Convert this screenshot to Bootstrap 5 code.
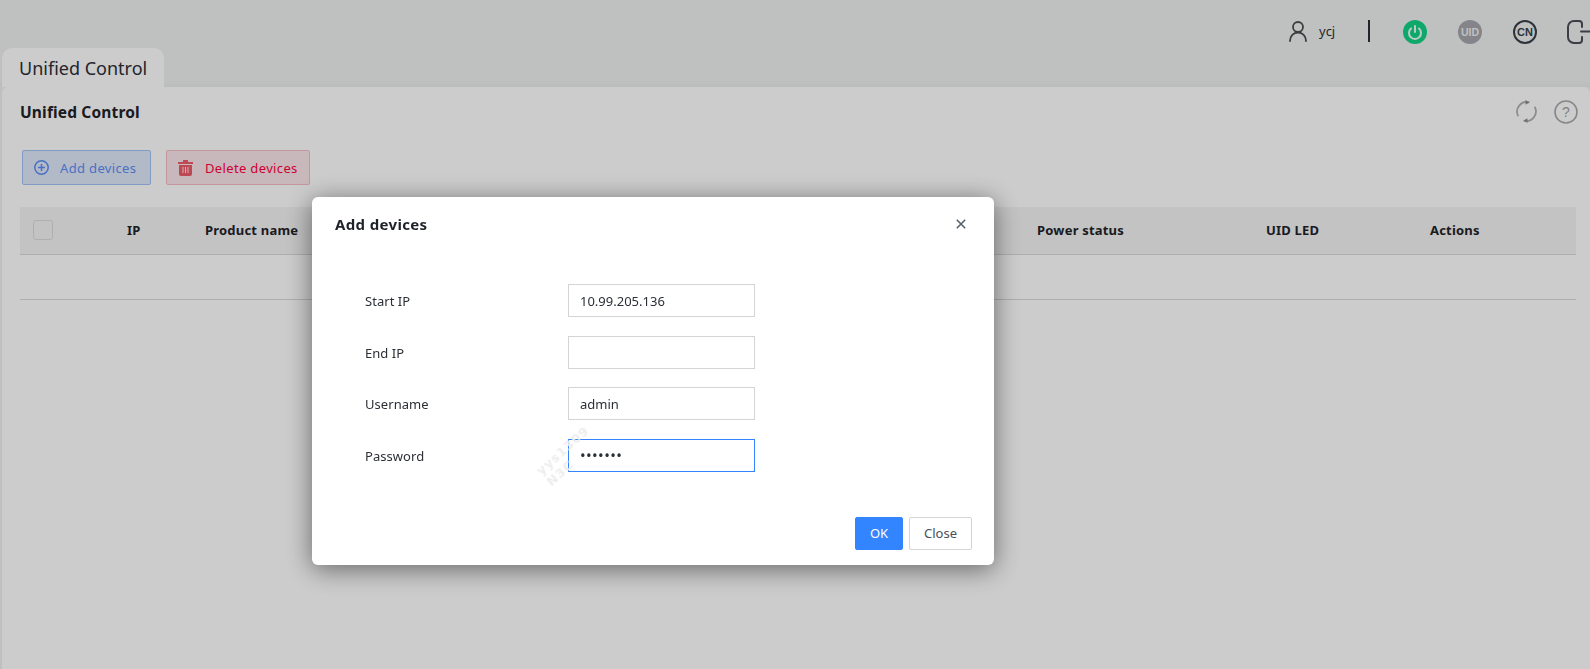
<!DOCTYPE html>
<html lang="en">
<head>
<meta charset="utf-8">
<title>Unified Control</title>
<link href="https://cdn.jsdelivr.net/npm/bootstrap@5.3.0/dist/css/bootstrap.min.css" rel="stylesheet">
<style>
html,body{height:100%;overflow:hidden}
body{background:#eff1f0;font-family:"Noto Sans","Open Sans","Liberation Sans",sans-serif;font-size:13px;color:#2b2f36}
.topbar{height:48px;padding-top:20px;overflow:hidden;width:1590px}
.topbar svg{display:block;flex:none}
.who{font-size:13px;margin:0 33px 0 12px;line-height:22px}
.sep{width:2px;height:22px;background:#2b2f36;margin-right:33px}
.ic24{margin-right:31px}
.tabline{height:39px;padding-left:2px;box-shadow:inset 0 -8px 8px -8px rgba(0,0,0,.05)}
.tabitem{width:162px;height:39px;background:#fff;border-radius:10px 10px 0 0;font-size:18px;padding:7px 0 0 17px;line-height:26px;color:#2b2f36}
.panelbox{margin-left:2px;background:#fff;height:582px;border-radius:6px 6px 0 0;padding:0 16px 0 18px}
.headrow{height:54px;padding-top:13px}
.headrow h1{font-size:15.5px;font-weight:700;margin:0;line-height:24px;color:#1f2329;letter-spacing:.15px}
.tools{margin-right:-4px;gap:16px}
.toolrow{margin:9px 0 22px 2px;gap:15px}
.actbtn{height:35px;font-size:13px;border-radius:2px;padding:2px 0 0 11px;display:flex;align-items:center;gap:11px;line-height:1;letter-spacing:.35px;white-space:nowrap}
.actadd{width:129px;background:#dfe9fb;border:1px solid #a3c2f7;color:#5d8cf5}
.actdel{width:144px;background:#fbe6ea;border:1px solid #f6bcc6;color:#ff0040;gap:12px}
.actbtn svg{margin-top:-2px;flex:none}
.devtable{table-layout:fixed;width:1556px;margin:0;--bs-table-bg:transparent}
.devtable th{background:#f4f4f4;height:47px;font-size:13px;font-weight:700;color:#1f2329;vertical-align:middle;padding:0;border-bottom:1px solid #d9dadd;letter-spacing:.2px}
.devtable td{height:45px;padding:0;border-bottom:1px solid #d9dadd}
.chk{display:block;width:20px;height:20px;border:1px solid #d9dce0;border-radius:3px;background:#f4f4f4;margin-left:13px}
.modal-backdrop.dim{opacity:.2}
.modal.addbox{display:block;z-index:1060}
.addbox .modal-dialog{margin:197px 0 0 312px;max-width:682px;width:682px}
.addbox .modal-content{height:368px;border:0;border-radius:6px;box-shadow:0 4px 26px rgba(0,0,0,.5);position:relative}
.addbox .modal-header{border:0;padding:15px 22px 0 23px;height:56px;align-items:flex-start}
.addbox .modal-title{font-size:15px;font-weight:700;line-height:24px;color:#1f2329;letter-spacing:.35px}
.xbtn{background:none;border:0;padding:0;margin:7px 6px 0 0;line-height:0}
.addbox .modal-body{padding:31px 53px 0;flex:none;height:264px}
.fieldrow{height:33px;margin-bottom:18.5px;display:flex;align-items:center}
.fieldrow label{width:203px;font-size:13px;color:#2b2f36;padding-top:3px;letter-spacing:.05px}
.fieldrow .form-control{width:187px;height:33px;border-radius:0;border:1px solid #d4d4d4;font-size:13px;padding:0 11px;color:#2b2f36;box-shadow:none}
.fieldrow .form-control.hot{border-color:#3385ff;font-size:15px;letter-spacing:.4px}
.addbox .modal-footer{border:0;padding:0 22px 0 0;justify-content:flex-end;gap:6px;display:flex}
.addbox .modal-footer .btn{margin:0;height:33px;font-size:13px;border-radius:2px;padding:0}
.okbtn{width:48px;background:#3385ff;border:1px solid #3385ff;color:#fff}
.clsbtn{width:63px;background:#fff;border:1px solid #d4d4d4;color:#4a4f57}
.wmark{position:absolute;left:223px;top:244px;transform:rotate(-42deg);font-family:"DejaVu Sans",sans-serif;font-weight:700;font-size:12.500px;line-height:15px;color:#ededed;white-space:nowrap;pointer-events:none;letter-spacing:1px;filter:blur(.4px)}
</style>
</head>
<body>
<header class="topbar d-flex justify-content-start">
  <div class="d-flex align-items-start" style="margin-left:1289px">
    <svg width="18" height="22" viewBox="0 0 18 22" fill="none" stroke="#4a4d52" stroke-width="1.800"><circle cx="9" cy="7" r="5"/><path d="M1 21c0-5 3.500-8.500 8-8.500s8 3.500 8 8.500" stroke-linecap="round"/></svg>
    <span class="who">ycj</span>
    <span class="sep"></span>
    <svg class="ic24" width="24" height="24" viewBox="0 0 24 24"><circle cx="12" cy="12" r="12" fill="#13d386"/><path d="M8 8.500a6 6 0 1 0 8 0" fill="none" stroke="#eafff5" stroke-width="2" stroke-linecap="round"/><path d="M12 6v6" stroke="#eafff5" stroke-width="2" stroke-linecap="round"/></svg>
    <svg class="ic24" width="24" height="24" viewBox="0 0 24 24"><circle cx="12" cy="12" r="12" fill="#a5a6ad"/><text x="12" y="15.800" text-anchor="middle" font-size="10.500" font-weight="700" fill="#f0f0f2" font-family="Liberation Sans">UID</text></svg>
    <svg class="ic24" width="24" height="24" viewBox="0 0 24 24"><circle cx="12" cy="12" r="11" fill="none" stroke="#3a3f4b" stroke-width="2"/><text x="12" y="16" text-anchor="middle" font-size="11" font-weight="700" fill="#3a3f4b" font-family="Liberation Sans">CN</text></svg>
    <svg width="24" height="24" viewBox="0 0 24 24" fill="none" stroke="#4a4e58" stroke-width="2" stroke-linecap="round" style="margin-left:-2px"><path d="M16 7V4a3 3 0 0 0-3-3H8a6 6 0 0 0-6 6v10a6 6 0 0 0 6 6h5a3 3 0 0 0 3-3v-3"/><path d="M15 11.500h9"/></svg>
  </div>
</header>
<div class="tabline"><div class="tabitem">Unified Control</div></div>
<main class="panelbox">
  <div class="headrow d-flex justify-content-between align-items-start">
    <h1>Unified Control</h1>
    <div class="tools d-flex">
      <svg width="23" height="23" viewBox="0 0 24 24" fill="none" stroke="#b0b1b3" stroke-width="1.800"><path d="M3.500 17A10 10 0 0 1 15 2.500"/><path d="M20.500 7A10 10 0 0 1 9 21.500"/><path d="M15 2.500l-4-2.500v5z" fill="#8a8b8e" stroke="none"/><path d="M9 21.500l4 2.500v-5z" fill="#8a8b8e" stroke="none"/></svg>
      <svg width="24" height="24" viewBox="0 0 24 24"><circle cx="12" cy="12" r="11" fill="none" stroke="#a8a9ab" stroke-width="1.600"/><text x="12" y="17" text-anchor="middle" font-size="14" fill="#a2a3a5" font-family="Liberation Sans">?</text></svg>
    </div>
  </div>
  <div class="toolrow d-flex">
    <button type="button" class="btn actbtn actadd">
      <svg width="15" height="15" viewBox="0 0 15 15" fill="none" stroke="#5d8cf5" stroke-width="1.500"><circle cx="7.500" cy="7.500" r="6.700"/><path d="M7.500 4v7M4 7.500h7"/></svg>
      Add devices
    </button>
    <button type="button" class="btn actbtn actdel">
      <svg width="15" height="16" viewBox="0 0 15 16"><path d="M5 0h5v2h5v2H0V2h5z" fill="#ee5a68"/><path d="M1 5h13v9a2 2 0 0 1-2 2H3a2 2 0 0 1-2-2z" fill="#ee5a68"/><path d="M5 7v6M7.500 7v6M10 7v6" stroke="#fbe6ea" stroke-width="1"/></svg>
      Delete devices
    </button>
  </div>
  <table class="table devtable">
    <colgroup><col style="width:107px"><col style="width:78px"><col style="width:832px"><col style="width:229px"><col style="width:164px"><col></colgroup>
    <thead><tr><th><span class="chk"></span></th><th>IP</th><th>Product name</th><th>Power status</th><th>UID LED</th><th>Actions</th></tr></thead>
    <tbody><tr><td colspan="6"></td></tr></tbody>
  </table>
</main>
<div class="modal-backdrop dim show"></div>
<div class="modal addbox" tabindex="-1" role="dialog" aria-modal="true">
  <div class="modal-dialog">
    <div class="modal-content">
      <div class="modal-header">
        <h5 class="modal-title flex-grow-1">Add devices</h5>
        <button type="button" class="xbtn" aria-label="Close"><svg width="10" height="10" viewBox="0 0 10 10" stroke="#55636f" stroke-width="1.600"><path d="M.8.800l8.400 8.400M9.200.800L.8 9.200"/></svg></button>
      </div>
      <div class="modal-body">
        <div class="fieldrow"><label for="f1">Start IP</label><input id="f1" class="form-control" value="10.99.205.136"></div>
        <div class="fieldrow"><label for="f2">End IP</label><input id="f2" class="form-control"></div>
        <div class="fieldrow"><label for="f3">Username</label><input id="f3" class="form-control" value="admin"></div>
        <div class="fieldrow"><label for="f4">Password</label><input id="f4" type="password" class="form-control hot" value="1234567"></div>
      </div>
      <div class="modal-footer">
        <button type="button" class="btn okbtn">OK</button>
        <button type="button" class="btn clsbtn">Close</button>
      </div>
      <div class="wmark">yys1309<br>N3C</div>
    </div>
  </div>
</div>
</body>
</html>
